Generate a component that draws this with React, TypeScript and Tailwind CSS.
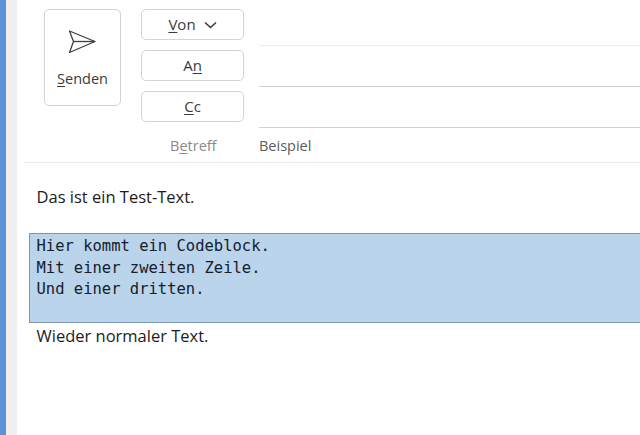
const sans = "font-['Open_Sans',sans-serif]";

function FieldButton({ children }: { children: React.ReactNode }) {
  return (
    <button className="flex h-[31px] w-[103px] items-center justify-center rounded-[5px] border border-[#d4d4d4] bg-white text-[15px] text-[#3b3b3b]">
      {children}
    </button>
  );
}

function FieldLine({ color }: { color: string }) {
  return <div className={`h-[41px] border-b ${color}`} />;
}

export default function App() {
  return (
    <div className={`flex h-[435px] w-[640px] overflow-hidden bg-white ${sans}`}>
      <div className="w-[6px] bg-[#5b93d6]" />
      <div className="w-[11px] bg-[#efefef]" />
      <div className="min-w-0 flex-1">
        <div className="ml-[7px] h-[163px] border-b border-[#ebebeb] pl-5 pt-[9px]">
          <div className="flex">
            <button className="flex h-[97px] w-[77px] flex-col items-center rounded-[5px] border border-[#d4d4d4] bg-white text-[14.5px] text-[#3b3b3b]">
              <svg width="30" height="26" viewBox="0 0 30 26" className="mt-[19px] -ml-[1px]" fill="none" stroke="#3f3f3f" strokeWidth="1.3" strokeLinejoin="round">
                <path d="M2.5 2 L28 12.5 L2.5 23.5 L6.5 12.5 Z" />
                <path d="M6.5 12.5 H28" />
              </svg>
              <span className="mt-[13px]"><span className="underline underline-offset-2">S</span>enden</span>
            </button>
            <div className="ml-5 flex w-[103px] flex-col gap-[10px]">
              <FieldButton>
                <span><span className="underline underline-offset-2">V</span>on</span>
                <svg width="13" height="8" viewBox="0 0 13 8" className="ml-[8px]" fill="none" stroke="#3b3b3b" strokeWidth="1.6">
                  <path d="M1 1.5 L6.5 6.5 L12 1.5" />
                </svg>
              </FieldButton>
              <FieldButton>
                <span>A<span className="underline underline-offset-2">n</span></span>
              </FieldButton>
              <FieldButton>
                <span><span className="underline underline-offset-2">C</span>c</span>
              </FieldButton>
            </div>
            <div className="ml-[15px] min-w-0 flex-1 -mt-[4px]">
              <FieldLine color="border-[#ececec]" />
              <FieldLine color="border-[#cfcfcf]" />
              <FieldLine color="border-[#cfcfcf]" />
            </div>
          </div>
          <div className="mt-[8px] flex text-[14.5px] leading-[20px]">
            <span className="ml-[97px] w-[118px] pl-[29px] text-[#8a8a8a]">
              B<span className="underline underline-offset-2">e</span>treff
            </span>
            <span className="text-[#5c5c5c]">Beispiel</span>
          </div>
        </div>
        <p className="ml-[19.5px] mt-[23px] text-[16.5px] leading-[22px] text-[#1c1c1c]">Das ist ein Test-Text.</p>
        <div className="ml-3 mt-[25px] h-[90px] border border-[#7d96ad] border-r-0 bg-[#bad4ec] pl-[6.5px] pt-[2px] font-['DejaVu_Sans_Mono',monospace] text-[15.5px] leading-[21.5px] text-[#14202c]">
          <div>Hier kommt ein Codeblock.</div>
          <div>Mit einer zweiten Zeile.</div>
          <div>Und einer dritten.</div>
        </div>
        <p className="ml-[19.5px] mt-[2px] text-[16.5px] leading-[22px] text-[#1c1c1c]">Wieder normaler Text.</p>
      </div>
    </div>
  );
}
